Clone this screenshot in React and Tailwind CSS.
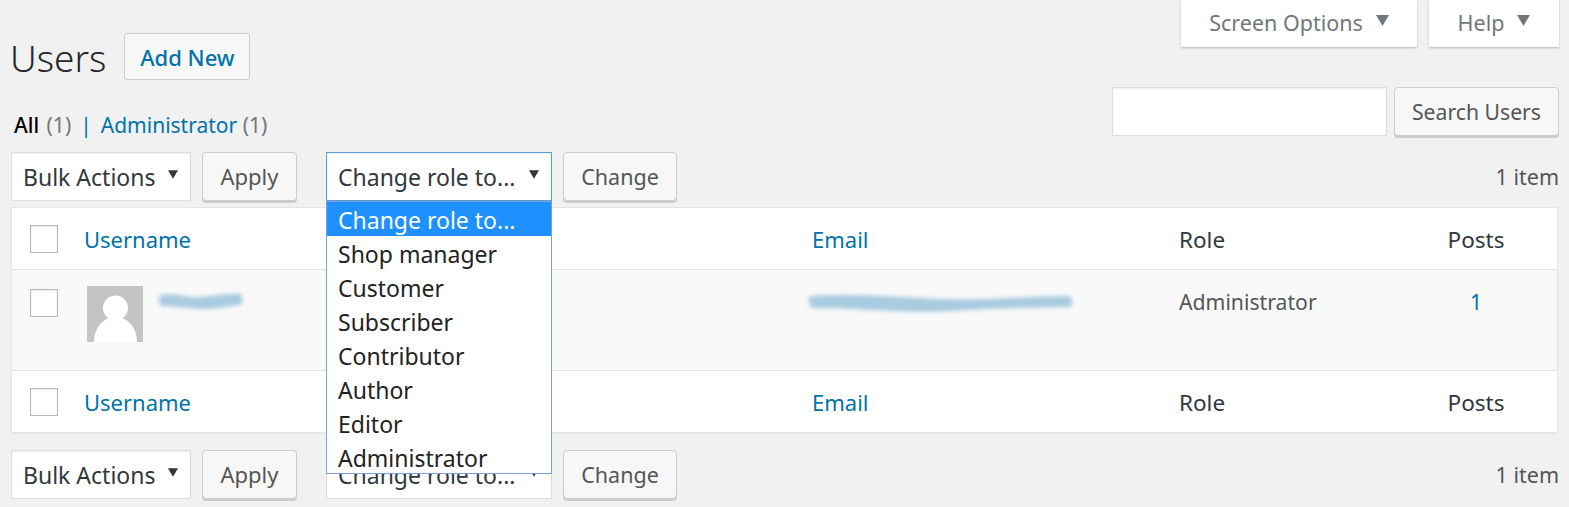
import React from 'react';

const font = { fontFamily: '"Noto Sans", "Open Sans", sans-serif' };

const Caret = ({ className }) => (
  <svg viewBox="0 0 12 10" className={className}>
    <path d="M0 0h12L6 10z" fill="currentColor" />
  </svg>
);

const Button = ({ children, className = '' }) => (
  <button className={`h-[49px] rounded-[4px] border border-[#cccccc] bg-[#f7f7f7] text-[#555555] shadow-[0_2px_0_#cccccc] ${className}`}>
    {children}
  </button>
);

const Checkbox = () => (
  <div className="w-[28px] h-[28px] border border-[#b4b9be] bg-white shadow-[inset_0_1px_2px_rgba(0,0,0,0.1)]" />
);

const Select = ({ label, className = '' }) => (
  <div className={`h-[49px] flex items-center justify-between bg-white border shadow-[inset_0_1px_2px_rgba(0,0,0,0.07)] pl-[11px] text-[#32373c] text-[23px] ${className}`}>
    <span className="pt-[2px]">{label}</span>
    <Caret className="w-[10px] h-[9px] mb-[4px] mr-[12px] text-[#32373c]" />
  </div>
);

const Smudge = ({ id, width, height, d }) => (
  <svg width={width} height={height} viewBox={`0 0 ${width} ${height}`} className="block">
    <defs>
      <filter id={id} x="-10%" y="-60%" width="120%" height="220%">
        <feGaussianBlur stdDeviation="2" />
      </filter>
    </defs>
    <path d={d} fill="#a9cbdf" filter={`url(#${id})`} />
  </svg>
);

const Toolbar = ({ changeClass }) => (
  <div className="flex items-center">
    <Select label="Bulk Actions" className="w-[180px] border-[#dddddd]" />
    <Button className="w-[95px] ml-[11px] text-[22px]">Apply</Button>
    <Select label="Change role to..." className={`w-[226px] ml-[29px] ${changeClass}`} />
    <Button className="w-[114px] ml-[11px] pt-[2px] text-[21.5px]">Change</Button>
    <span className="ml-auto pt-[2px] text-[21.5px] text-[#555555]">1 item</span>
  </div>
);

const roles = ['Change role to...', 'Shop manager', 'Customer', 'Subscriber', 'Contributor', 'Author', 'Editor', 'Administrator'];

const HeadRow = ({ className = '' }) => (
  <div className={`grid grid-cols-[72px_728px_367px_225px_144px] items-center h-[62px] text-[22.5px] text-[#32373c] ${className}`}>
    <div className="pl-[18px]"><Checkbox /></div>
    <a className="text-[#0073aa] text-[22px] pt-[2px]">Username</a>
    <a className="text-[#0073aa] text-[22px] pt-[2px]">Email</a>
    <span className="pt-[2px]">Role</span>
    <span className="text-center pt-[2px]">Posts</span>
  </div>
);

export default function App() {
  return (
    <div style={font} className="relative w-[1569px] h-[507px] overflow-hidden bg-[#f1f1f1] pl-[11px] pr-[10px]">
      <div className="flex justify-between h-[152px]">
        <div className="pt-[33px]">
          <div className="flex items-center h-[47px]">
            <h1 className="text-[37px] leading-[47px] pt-[2px] -ml-[1px] font-light text-[#23282d]">Users</h1>
            <button className="ml-[18px] h-[47px] w-[126px] pt-[2px] rounded-[3px] border border-[#cccccc] bg-[#f7f7f7] text-[#0073aa] text-[22px] font-medium">Add New</button>
          </div>
          <div className="mt-[30px] pl-[3px] text-[21px] leading-[30px] text-[#72777c]">
            <span className="text-black font-medium mr-[2px]">All</span> (1)
            <span className="text-[#0073aa] mx-[9px]">|</span>
            <a className="text-[#0073aa]">Administrator</a> (1)
          </div>
        </div>
        <div className="flex flex-col items-end">
          <div className="flex gap-[12px] h-[47px]">
            <div className="flex items-center justify-center w-[236px] bg-white shadow-[0_1px_2px_rgba(0,0,0,0.25)] text-[#72777c] text-[21.5px]">
              Screen Options
              <Caret className="w-[13px] h-[11px] ml-[13px] mb-[6px]" />
            </div>
            <div className="flex items-center justify-center w-[130px] bg-white shadow-[0_1px_2px_rgba(0,0,0,0.25)] text-[#72777c] text-[21.5px]">
              Help
              <Caret className="w-[13px] h-[11px] ml-[13px] mb-[6px]" />
            </div>
          </div>
          <div className="flex gap-[7px] mt-[40px]">
            <div className="w-[275px] h-[49px] bg-white border border-[#dddddd] shadow-[inset_0_1px_2px_rgba(0,0,0,0.07)]" />
            <Button className="w-[165px] text-[21.2px]">Search Users</Button>
          </div>
        </div>
      </div>

      <Toolbar changeClass="border-[#5b9dd9]" />

      <div className="mt-[6px] mr-[1px] bg-white border border-[#e5e5e5] shadow-[0_1px_1px_rgba(0,0,0,0.04)]">
        <HeadRow className="border-b border-[#e1e1e1]" />
        <div className="grid grid-cols-[72px_728px_367px_225px_144px] h-[100px] bg-[#f9f9f9] text-[21.2px] text-[#555555]">
          <div className="pl-[18px] pt-[19px]"><Checkbox /></div>
          <div className="flex pt-[16px] pl-[3px]">
            <svg width="56" height="56" viewBox="0 0 56 56" className="shrink-0">
              <rect width="56" height="56" fill="#c4c4c4" />
              <circle cx="28.5" cy="22" r="12.5" fill="#ffffff" />
              <path d="M7 56c0-14 9-25 21.5-25S50 42 50 56z" fill="#ffffff" />
            </svg>
            <div className="ml-[10px] mt-[1px]">
              <Smudge id="smudgeUser" width={100} height={30} d="M8 8c10-2 20 1 32 2s30-4 48-3c2 4 2 8 0 11-14 1-26 5-42 4S18 19 8 19c-3-4-3-8 0-11z" />
            </div>
          </div>
          <div className="-ml-[7px] pt-[19px]">
            <Smudge id="smudgeEmail" width={272} height={30} d="M5 7c40-3 92 1 132 3s80-3 128-3c3 3 3 8 1 11-42 1-82 1-120 4-42 3-92-3-139-3-4-4-4-9-2-12z" />
          </div>
          <div className="pt-[15px] leading-[33px]">Administrator</div>
          <div className="pt-[15px] leading-[33px] text-center text-[#0073aa]">1</div>
        </div>
        <HeadRow className="border-t border-[#e1e1e1]" />
      </div>

      <div className="mt-[17px]">
        <Toolbar changeClass="border-[#dddddd]" />
      </div>

      {/* Lista aberta do select */}
      <div className="absolute left-[326px] top-[201px] w-[226px] h-[273px] overflow-hidden bg-white border border-[#7b9fd6] text-[23px] text-[#222222] leading-[36px]">
        {roles.map((role, i) => (
          <div key={role} className={`h-[34px] pl-[11px] ${i === 0 ? 'bg-[#1e90ff] text-white' : ''}`}>{role}</div>
        ))}
      </div>
    </div>
  );
}
